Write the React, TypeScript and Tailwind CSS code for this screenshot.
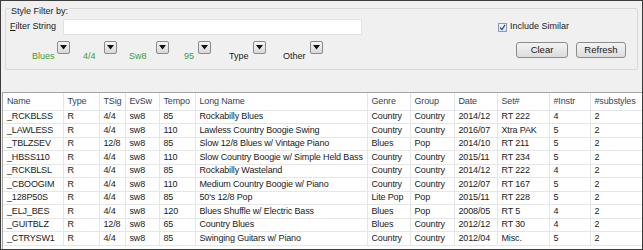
import React from 'react';

const FONT = { fontFamily: '"Liberation Sans", Arial, sans-serif' };

const columns = [
  { key: 'name', label: 'Name', w: 'w-[60px]' },
  { key: 'type', label: 'Type', w: 'w-[36px]' },
  { key: 'tsig', label: 'TSig', w: 'w-[26px]' },
  { key: 'evsw', label: 'EvSw', w: 'w-[34px]' },
  { key: 'tempo', label: 'Tempo', w: 'w-[36px]' },
  { key: 'long', label: 'Long Name', w: 'w-[172px]' },
  { key: 'genre', label: 'Genre', w: 'w-[43px]' },
  { key: 'group', label: 'Group', w: 'w-[44px]' },
  { key: 'date', label: 'Date', w: 'w-[43px]' },
  { key: 'set', label: 'Set#', w: 'w-[52px]' },
  { key: 'instr', label: '#Instr', w: 'w-[41px]' },
  { key: 'subs', label: '#substyles', w: 'w-[52px]' },
];

const rows = [
  ['_RCKBLSS', 'R', '4/4', 'sw8', '85', 'Rockabilly Blues', 'Country', 'Country', '2014/12', 'RT 222', '4', '2'],
  ['_LAWLESS', 'R', '4/4', 'sw8', '110', 'Lawless Country Boogie Swing', 'Country', 'Country', '2016/07', 'Xtra PAK', '5', '2'],
  ['_TBLZSEV', 'R', '12/8', 'sw8', '85', 'Slow 12/8 Blues w/ Vintage Piano', 'Blues', 'Pop', '2014/10', 'RT 211', '5', '2'],
  ['_HBSS110', 'R', '4/4', 'sw8', '110', 'Slow Country Boogie w/ Simple Held Bass', 'Country', 'Country', '2015/11', 'RT 234', '5', '2'],
  ['_RCKBLSL', 'R', '4/4', 'sw8', '85', 'Rockabilly Wasteland', 'Country', 'Country', '2014/12', 'RT 222', '4', '2'],
  ['_CBOOGIM', 'R', '4/4', 'sw8', '110', 'Medium Country Boogie w/ Piano', 'Country', 'Country', '2012/07', 'RT 167', '5', '2'],
  ['_128P50S', 'R', '4/4', 'sw8', '85', "50's 12/8 Pop", 'Lite Pop', 'Pop', '2015/11', 'RT 228', '5', '2'],
  ['_ELJ_BES', 'R', '4/4', 'sw8', '120', 'Blues Shuffle w/ Electric Bass', 'Blues', 'Pop', '2008/05', 'RT 5', '4', '2'],
  ['_GUITBLZ', 'R', '12/8', 'sw8', '65', 'Country Blues', 'Blues', 'Country', '2012/12', 'RT 30', '4', '2'],
  ['_CTRYSW1', 'R', '4/4', 'sw8', '85', 'Swinging Guitars w/ Piano', 'Country', 'Country', '2012/04', 'Misc.', '5', '2'],
];

// text width sets where the ▼ button lands, ml is the gap before each pair
const filters = [
  { label: 'Blues', green: true, ml: 'ml-[22px]', w: 'w-[25px]' },
  { label: '4/4', green: true, ml: 'ml-[13px]', w: 'w-[21px]' },
  { label: 'Sw8', green: true, ml: 'ml-[12px]', w: 'w-[27px]' },
  { label: '95', green: true, ml: 'ml-[15px]', w: 'w-[14px]' },
  { label: 'Type', green: false, ml: 'ml-[18px]', w: 'w-[24px]' },
  { label: 'Other', green: false, ml: 'ml-[17px]', w: 'w-[27px]' },
];

function DropButton() {
  return (
    <div className="w-[13px] h-[13px] shrink-0 rounded-[2px] border border-[#8a8a8a] bg-gradient-to-b from-[#f6f6f6] to-[#d8d8d8] flex items-center justify-center">
      <svg width="7" height="5" viewBox="0 0 7 5">
        <path d="M0 0 H7 L3.5 4.5 Z" fill="#111" />
      </svg>
    </div>
  );
}

function Button({ children, w }: { children: React.ReactNode; w: string }) {
  return (
    <button className={`${w} shrink-0 h-[16px] rounded-[3px] border border-[#8c8c8c] bg-gradient-to-b from-[#f4f4f4] to-[#dcdcdc] text-[9.5px] text-[#1a1a1a] leading-none flex items-center justify-center`}>
      {children}
    </button>
  );
}

export default function App() {
  return (
    <div style={FONT} className="w-[643px] h-[250px] border border-[#3c3c3c] bg-[#f0f0f0] flex flex-col overflow-hidden text-[#1a1a1a]">
      {/* filter group */}
      <div className="relative mx-[4px] mt-[7px] h-[62px] shrink-0 border border-[#d9d9d9] rounded-[2px] px-[4px]">
        <span className="absolute left-[4px] -top-[3px] bg-[#f0f0f0] px-[1px] text-[9px] leading-[11px]">Style Filter by:</span>
        <div className="flex items-center mt-[10px]">
          <span className="text-[9px] w-[53px] shrink-0">
            <span className="underline">F</span>ilter String
          </span>
          <div className="w-[299px] h-[16px] shrink-0 bg-white border border-[#e2e2e2]" />
          <label className="ml-[136px] flex items-center gap-[3px] text-[9px]">
            <span className="w-[9px] h-[9px] border border-[#8f9bb3] bg-gradient-to-b from-[#f4f7fb] to-[#dfe6ef] flex items-center justify-center">
              <svg width="7" height="7" viewBox="0 0 7 7">
                <path d="M1 3.5 L3 5.5 L6 0.8" stroke="#2b4f9e" strokeWidth="1.3" fill="none" />
              </svg>
            </span>
            Include Similar
          </label>
        </div>
        <div className="flex items-start mt-[6px]">
          {filters.map((f) => (
            <div key={f.label} className={`flex items-start ${f.ml}`}>
              <span className={`${f.w} text-[9px] leading-[10px] mt-[10px] ${f.green ? 'text-[#3d9b3d]' : 'text-[#1a1a1a]'}`}>{f.label}</span>
              <DropButton />
            </div>
          ))}
          <div className="ml-auto mr-[7px] mt-[1px] flex gap-[8px]">
            <Button w="w-[52px]">Clear</Button>
            <Button w="w-[50px]">Refresh</Button>
          </div>
        </div>
      </div>

      {/* style table */}
      <div className="mt-[22px] ml-[1px] flex-1 border-l border-t border-[#a5a5a5] bg-white overflow-hidden">
        <table className="table-fixed border-collapse w-[639px] text-[9px] tracking-[-0.15px]">
          <thead>
            <tr className="h-[17px]">
              {columns.map((c) => (
                <th key={c.key} className={`${c.w} p-0 pl-[4px] text-left font-normal text-[#34445a] border-r border-b border-[#e1e4e8] whitespace-nowrap overflow-hidden`}>
                  {c.label}
                </th>
              ))}
            </tr>
          </thead>
          <tbody>
            {rows.map((r) => (
              <tr key={r[0]} className="h-[13.5px]">
                {r.map((v, i) => (
                  <td key={i} className="p-0 pl-[4px] border-r border-b border-[#e6e6e6] whitespace-nowrap overflow-hidden leading-[11px]">
                    {v}
                  </td>
                ))}
              </tr>
            ))}
          </tbody>
        </table>
      </div>
    </div>
  );
}
